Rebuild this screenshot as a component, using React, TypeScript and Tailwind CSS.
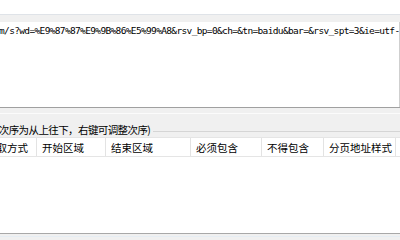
const url =
  'm/s?wd=%E9%87%87%E9%9B%86%E5%99%A8&rsv_bp=0&ch=&tn=baidu&bar=&rsv_spt=3&ie=utf-8';

const cols = [
  { label: '获取方式', w: 'w-[37px]', indent: '-ml-[14px]' },
  { label: '开始区域', w: 'w-[69px]', indent: 'ml-[5px]' },
  { label: '结束区域', w: 'w-[85px]', indent: 'ml-[5px]' },
  { label: '必须包含', w: 'w-[71px]', indent: 'ml-[5px]' },
  { label: '不得包含', w: 'w-[62px]', indent: 'ml-[5px]' },
  { label: '分页地址样式', w: 'w-[72px]', indent: 'ml-[5px]' },
];

export default function App() {
  return (
    <div className="w-[400px] h-[240px] overflow-hidden bg-white flex flex-col text-[10.5px] text-black font-['Noto_Sans_CJK_SC',sans-serif]">
      {/* top strip */}
      <div className="h-[14px] bg-white" />
      <div className="h-[8px] bg-[#f0f0f0] border-t border-[#dfe3e8]" />

      {/* url text box */}
      <div className="h-[85px] bg-white border-r border-[#cfcfcf] overflow-hidden">
        <div className="mt-[3px] -ml-[1px] whitespace-nowrap font-['DejaVu_Sans_Mono',monospace] text-[9.5px] tracking-[-0.65px] leading-[12px]">
          {url}
        </div>
      </div>

      {/* group box */}
      <div className="border-t border-[#a0a0a0] bg-[#f0f0f0]">
        <div className="h-[6px] border-b border-[#fbfbfb]" />
        <div className="h-[23px] pt-[8px] flex items-center">
          <span className="-ml-[21px] whitespace-nowrap leading-[14px] tracking-[-0.6px]">
            执行次序为从上往下，右键可调整次序)
          </span>
          <div className="flex-1 ml-[3px] mt-[3px] border-t border-[#d5d5d5]" />
        </div>
      </div>

      {/* list header */}
      <div className="h-[20px] flex bg-white border-t border-[#d5d5d5] border-b border-[#e5e5e5]">
        {cols.map((c) => (
          <div
            key={c.label}
            className={`${c.w} shrink-0 h-full pt-[2px] flex items-center overflow-hidden border-r border-[#e3e3e3]`}
          >
            <span className={`${c.indent} whitespace-nowrap`}>{c.label}</span>
          </div>
        ))}
      </div>

      {/* list body */}
      <div className="flex-1 bg-white" />

      {/* bottom */}
      <div className="h-[7px] bg-[#f0f0f0] border-t border-[#a8a8a8]">
        <div className="mt-[2px] border-t border-[#e6edf3]" />
      </div>
    </div>
  );
}
